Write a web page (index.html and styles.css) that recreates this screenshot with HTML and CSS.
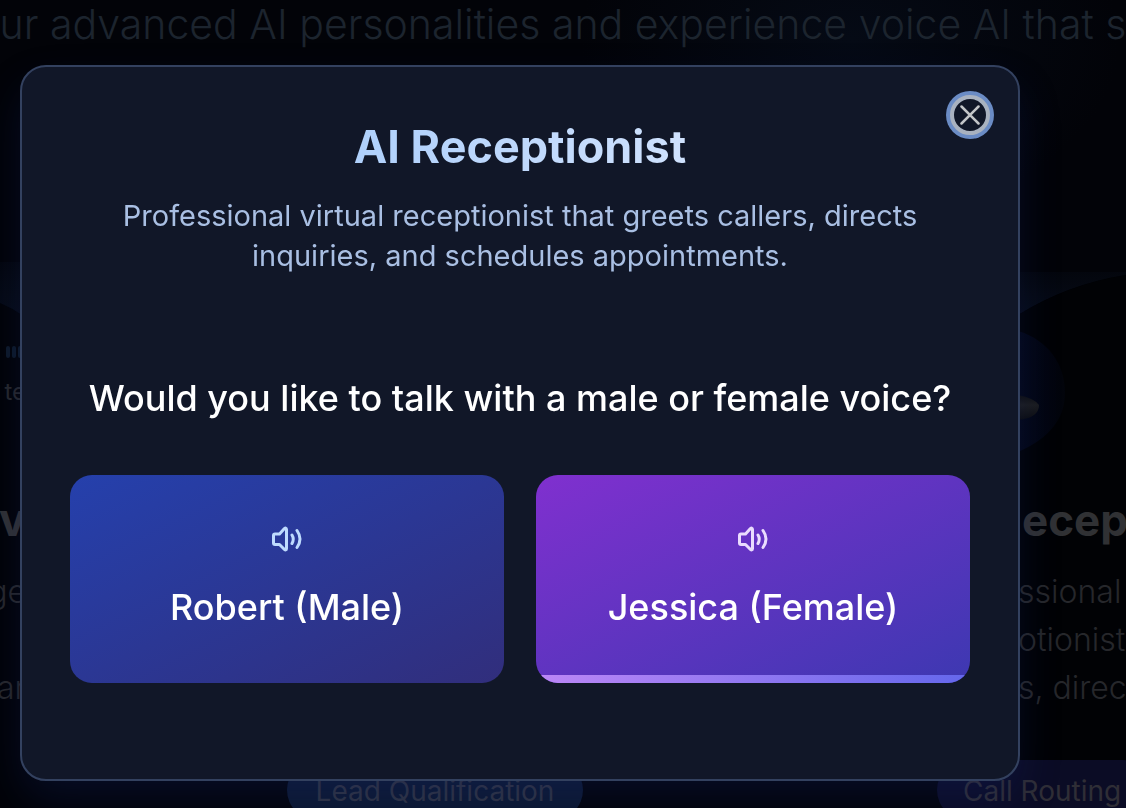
FILE: index.html
```html
<!DOCTYPE html>
<html lang="en">
<head>
<meta charset="utf-8">
<meta name="viewport" content="width=device-width, initial-scale=1">
<title>AI Receptionist</title>
<link rel="stylesheet" href="styles.css">
</head>
<body>
<main class="page" aria-hidden="true">
  <svg class="backdrop" viewBox="0 0 1126 808" preserveAspectRatio="none">
    <defs>
      <linearGradient id="band" x1="0" y1="0" x2="0" y2="1"><stop offset="0" stop-color="#070d19" stop-opacity=".3"/><stop offset="1" stop-color="#060b18"/></linearGradient>
      <linearGradient id="orb" x1="0" y1="0" x2="1" y2="0"><stop offset="0" stop-color="#030718"/><stop offset="1" stop-color="#02040b"/></linearGradient>
      <linearGradient id="mic" x1="0" y1="0" x2="0" y2="1"><stop offset="0" stop-color="#0d0e10"/><stop offset=".4" stop-color="#1b1c1e"/><stop offset="1" stop-color="#0b0c0f"/></linearGradient>
      <radialGradient id="glow"><stop offset="0" stop-color="#050a15"/><stop offset="1" stop-color="#050a15" stop-opacity="0"/></radialGradient>
    </defs>
    <ellipse cx="850" cy="40" rx="270" ry="180" fill="url(#glow)"/>
    <rect x="0" y="262" width="40" height="60" fill="url(#band)"/>
    <path d="M0 303 Q12 308 22 315 V600 H0Z" fill="#020307"/>
    <path d="M1018 272H1126V275Q1068 284 1018 315Z" fill="url(#band)"/>
    <path d="M1018 315Q1068 284 1126 275V760H1018Z" fill="#010205"/>
    <path d="M1018 331C1048 340 1065 364 1065 393C1065 418 1050 438 1018 452Z" fill="url(#orb)"/>
    <path d="M1018 395Q1034 398 1039 405Q1039 418 1018 420Z" fill="url(#mic)"/>
  </svg>
  <p class="hero">ur advanced AI personalities and experience voice AI that s</p>
  <div class="cards">
    <section class="card card-left">
      <div class="bars"><i></i><i></i><i></i></div>
      <p class="tag">te</p>
      <h2>rv</h2>
      <p>ge</p>
      <p class="last">ar</p>
    </section>
    <section class="card card-right">
      <h2>ecep</h2>
      <p>ssional</p>
      <p>otionist</p>
      <p>s, direc</p>
    </section>
  </div>
  <div class="pills">
    <span class="pill">Lead Qualification</span>
    <span class="pill pill-violet">Call Routing</span>
  </div>
</main>
<div class="overlay">
  <div class="dialog" role="dialog" aria-modal="true" aria-labelledby="title">
    <button class="close" type="button" aria-label="Close">
      <svg viewBox="0 0 24 24"><path d="M3.500 3.500 20.500 20.500M20.500 3.500 3.500 20.500"/></svg>
    </button>
    <h1 id="title">AI Receptionist</h1>
    <p class="intro">Professional virtual receptionist that greets callers, directs<br>inquiries, and schedules appointments.</p>
    <h2 class="question">Would you like to talk with a male or female voice?</h2>
    <div class="choices">
      <button class="choice male" type="button">
        <svg viewBox="0 0 32 32"><path d="M2.500 12.500Q2.500 11 4 11H8.500L13 6Q15.500 4 15.500 6.500V25.500Q15.500 28 13 26L8.500 21.500H4Q2.500 21.500 2.500 20Z"/><path d="M21 12Q23.500 16 21 20.500M26 7.500Q32 16 26 24.500"/></svg>
        <span>Robert (Male)</span>
      </button>
      <button class="choice female" type="button">
        <svg viewBox="0 0 32 32"><path d="M2.500 12.500Q2.500 11 4 11H8.500L13 6Q15.500 4 15.500 6.500V25.500Q15.500 28 13 26L8.500 21.500H4Q2.500 21.500 2.500 20Z"/><path d="M21 12Q23.500 16 21 20.500M26 7.500Q32 16 26 24.500"/></svg>
        <span>Jessica (Female)</span>
      </button>
    </div>
  </div>
</div>
</body>
</html>
```
FILE: styles.css
```css
* { box-sizing: border-box; }
body { margin: 0; background: #020308; font-family: Inter, "Liberation Sans", sans-serif; }
h1, h2, p { margin: 0; }
.page { position: relative; height: 100vh; overflow: hidden; color: #26272b; }
.backdrop { position: absolute; inset: 0; width: 100%; height: 100%; }
.hero, .cards, .pills { position: relative; }
.hero { display: flex; justify-content: center; font-size: 41px; line-height: 48px; font-weight: 300; white-space: nowrap; color: #1c242e; }
.cards { display: flex; justify-content: space-between; height: 712px; }
.card { display: flex; flex-direction: column; font-size: 32px; line-height: 48px; font-weight: 300; white-space: nowrap; }
.card h2 { margin-bottom: 20px; font-size: 45px; line-height: 56px; color: #303134; }
.card-left { align-items: flex-end; width: 26px; padding-top: 298px; }
.card-right { width: 108px; padding-top: 444px; }
.card-right h2 { padding-left: 4px; font-size: 44px; }
.bars { display: flex; gap: 2px; width: 20px; height: 16px; }
.bars i { width: 4px; height: 12px; border-radius: 2px; background: #0d1929; }
.card .tag { margin: 14px 0 84px; font-size: 24px; line-height: 32px; font-weight: 400; }
.card .last { margin-top: 48px; }
.pills { display: flex; gap: 354px; padding-left: 287px; }
.pill { flex: none; width: 296px; height: 60px; border-radius: 30px; background: #0c1830; color: #2f3340; text-align: center; font-size: 28px; line-height: 62px; }
.pill-violet { width: 216px; background: #0b0c25; color: #2f2e36; text-align: left; padding-left: 26px; }
.overlay { position: fixed; inset: 0; padding: 65px 106px 27px 20px; }
.dialog { position: relative; padding: 56px 48px 96px; border: 2px solid #33415f; border-radius: 26px; background: #111728; box-shadow: 0 20px 44px -4px rgba(20, 40, 120, .28); text-align: center; color: #fff; }
.close { position: absolute; top: 28px; right: 28px; display: grid; place-items: center; width: 40px; height: 40px; padding: 0; border: 4px solid #a9b2c0; border-radius: 50%; background: #111728; box-shadow: 0 0 0 4px #6b8cc5; }
.close svg { width: 24px; height: 24px; fill: none; stroke: #c4c6c9; stroke-width: 2.5; stroke-linecap: round; }
h1 { width: fit-content; margin: 0 auto; font-size: 45px; line-height: 48px; font-weight: 700; background: linear-gradient(90deg, #afd0fb, #cfe1fd); background-clip: text; color: transparent; }
.intro { margin-top: 25px; font-size: 29px; line-height: 40px; color: #a9bfe3; }
.question { display: flex; justify-content: center; margin-top: 98px; font-size: 36px; line-height: 48px; font-weight: 500; white-space: nowrap; }
.choices { display: grid; grid-template-columns: 1fr 1fr; gap: 32px; margin-top: 53px; }
.choice { position: relative; display: flex; flex-direction: column; align-items: center; gap: 28px; height: 208px; padding: 48px 16px; border: 0; border-radius: 22px; overflow: hidden; color: #fff; font: 500 36px/48px Inter, "Liberation Sans", sans-serif; white-space: nowrap; }
.choice svg { width: 32px; height: 32px; fill: none; stroke: #bfdbfe; stroke-width: 3; stroke-linecap: round; stroke-linejoin: round; }
.male { background: linear-gradient(to bottom right, #2540ac, #312e7c); }
.female { background: linear-gradient(to bottom right, #8030cf, #3d38b1); }
.female svg { stroke: #eadcfe; }
.female::after { content: ""; position: absolute; inset: auto 0 0; height: 8px; background: linear-gradient(90deg, #bc87f6, #6467ec); }
```
